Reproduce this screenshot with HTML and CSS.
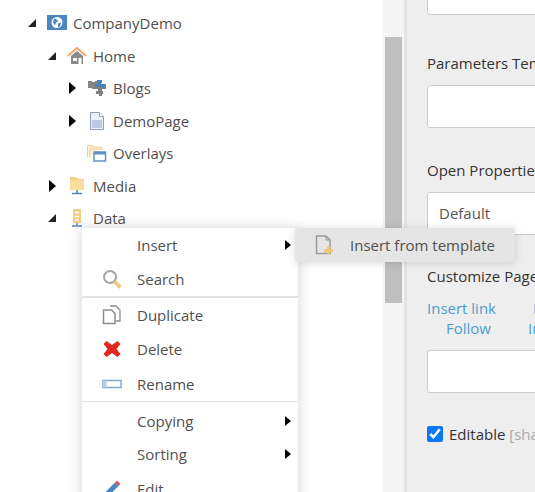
FILE: index.html
```html
<!DOCTYPE html>
<html lang="en">
<head>
  <meta charset="UTF-8" />
  <title>Page Properties</title>
  <link rel="stylesheet" href="styles.css">
</head>
<body>
  <div class="page">
    <div class="tree">
      <div class="row depth-0">
        <span class="arrow open"></span>
        <svg class="icon" viewBox="0 0 20 18"><rect y="1" width="20" height="15" fill="#4a86c0"/><circle cx="10" cy="8.500" r="5.500" fill="#fff"/><path d="M7 4.500l3 1 1 2-2 1-1 3-2-3zM11 9.500l3-1-1 4-2 1z" fill="#4a86c0"/></svg>
        <span class="label">CompanyDemo</span>
      </div>
      <div class="row depth-1">
        <span class="arrow open"></span>
        <svg class="icon" viewBox="0 0 20 18"><path d="M1 9l9-8 9 8" fill="none" stroke="#f2a56c" stroke-width="2"/><path d="M4 9l6-5 6 5v8H4z" fill="#8a8a8a"/><rect x="6" y="11" width="4" height="3" fill="#fff"/><rect x="11.500" y="11" width="3" height="6" fill="#fff"/></svg>
        <span class="label">Home</span>
      </div>
      <div class="row depth-2">
        <span class="arrow closed"></span>
        <svg class="icon" viewBox="0 0 20 18"><path d="M1 2h4v1h3V2h3v7H8v1H5V9H1z" fill="#868686"/><path d="M7 7h4V6h8v4h-4v2h1v3h-1v2h-3v-2H9v-3h2v-2H7z" fill="#808080"/><path d="M10 1h5v3h-1v1h5v3H8V5h3V4h-1z" fill="#4a82bd"/></svg>
        <span class="label">Blogs</span>
      </div>
      <div class="row depth-2">
        <span class="arrow closed"></span>
        <svg class="icon" viewBox="0 0 20 18"><path d="M3.500.5h9l4 4v13h-13z" fill="#eef1f8" stroke="#8d9dbc"/><path d="M5 8h10v8H5z" fill="#bcc8e2"/><path d="M12.500.5v4h4" fill="#fff" stroke="#8d9dbc"/></svg>
        <span class="label">DemoPage</span>
      </div>
      <div class="row depth-2">
        <span class="arrow"></span>
        <svg class="icon" viewBox="0 0 20 18"><path d="M.5 13V1.500h5l1 1.500h8v3" fill="#fdf0d8" stroke="#f3cd8a"/><path d="M3 14V5h13" fill="none" stroke="#f3cd8a"/><rect x="7" y="8" width="11.500" height="9" fill="#fff" stroke="#5f92c6" stroke-width="1.500"/><rect x="7" y="8" width="11.500" height="2.500" fill="#5f92c6"/></svg>
        <span class="label">Overlays</span>
      </div>
      <div class="row depth-1">
        <span class="arrow closed"></span>
        <svg class="icon" viewBox="0 0 20 18"><path d="M3 0h6l2 2h6v11H3z" fill="#f6cd85"/><path d="M3 3h14v10H3z" fill="#fadc9f"/><path d="M10 13v3M5 16.500h10" stroke="#4a86c0" stroke-width="1.500"/></svg>
        <span class="label">Media</span>
      </div>
      <div class="row depth-1">
        <span class="arrow open"></span>
        <svg class="icon" viewBox="0 0 20 18"><path d="M6 0h8v14H6z" fill="#f6cd85"/><path d="M8 3.500h4M8 7.500h4M8 11h4" stroke="#fff" stroke-width="1.500"/><path d="M10 14v2M5 17h10" stroke="#4a86c0" stroke-width="1.500"/></svg>
        <span class="label">Data</span>
      </div>
    </div>

    <div class="scrollbar"><div class="thumb"></div></div>

    <div class="props">
      <div class="field first"><div class="input"></div></div>
      <div class="field">
        <div class="field-label">Parameters Template</div>
        <div class="input"></div>
      </div>
      <div class="field select-field">
        <div class="field-label">Open Properties</div>
        <div class="input select">Default</div>
      </div>
      <div class="field">
        <div class="field-label">Customize Page</div>
        <div class="toolbar">
          <div class="tool-line"><a>Insert link</a><i></i><a>Insert</a></div>
          <div class="tool-line second"><a>Follow</a><i></i><a>Insert</a></div>
        </div>
        <div class="input"></div>
      </div>
      <label class="check">
        <input type="checkbox" checked />
        <span>Editable <em>[shared]</em></span>
      </label>
      <div class="field-label tail">Parameters</div>
    </div>
  </div>

  <div class="menu">
    <div class="item"><span class="item-icon"></span>Insert<span class="sub"></span></div>
    <div class="item">
      <svg class="item-icon" viewBox="0 0 20 20"><circle cx="8" cy="8" r="6" fill="#fff" stroke="#a5a5a5" stroke-width="2"/><path d="M12.500 12.500l6 6" stroke="#f4c878" stroke-width="3.500"/></svg>
      Search
    </div>
    <div class="divider thick"></div>
    <div class="item">
      <svg class="item-icon" viewBox="0 0 20 20"><path d="M8 1h6l4 4v11h-4" fill="#fff" stroke="#8c8c8c" stroke-width="1.300"/><path d="M1.500 5h8l3.500 3.500v10h-11.500z" fill="#fff" stroke="#8c8c8c" stroke-width="1.500"/></svg>
      Duplicate
    </div>
    <div class="item">
      <svg class="item-icon" viewBox="0 0 20 20"><path d="M4.500 2l5.500 4 5.500-4 3 3-4 5 4 5-3 3-5.500-4-5.500 4-3-3 4-5-4-5z" fill="#e0281c"/></svg>
      Delete
    </div>
    <div class="item">
      <svg class="item-icon" viewBox="0 0 20 20"><rect x="1" y="6.500" width="18" height="7" fill="#fff" stroke="#86a8d0" stroke-width="1.500"/><rect x="1" y="6.500" width="3.500" height="7" fill="#b8cce4"/></svg>
      Rename
    </div>
    <div class="divider gap"></div>
    <div class="item tight"><span class="item-icon"></span>Copying<span class="sub"></span></div>
    <div class="item tight"><span class="item-icon"></span>Sorting<span class="sub"></span></div>
    <div class="item last">
      <svg class="item-icon" viewBox="0 0 20 20"><path d="M2 18l1.500-5L13 3.500l3.500 3.500L7 16.500z" fill="#4a86c0"/><path d="M13 3.500l2-2 3.500 3.500-2 2z" fill="#e0574c"/><path d="M2 18l1.500-5 3.500 3.500z" fill="#f0d9b0"/></svg>
      Edit
    </div>
  </div>

  <div class="submenu">
    <svg class="sub-icon" viewBox="0 0 18 20"><path d="M1.500 1h9.500l4 4v13.500H1.500z" fill="none" stroke="#9a9a9a" stroke-width="1.500"/><path d="M11 1v4h4" fill="none" stroke="#9a9a9a"/><path d="M12 11h3v3h3v3h-3v3h-3v-3H9v-3h3z" fill="#f1c677"/></svg>
    Insert from template
  </div>
</body>
</html>
```

FILE: styles.css
```css
body {
  margin: 0;
  height: 492px;
  overflow: hidden;
  position: relative;
  background: #fff;
  color: #505050;
  font-family: 'Open Sans', sans-serif;
  font-size: 15px;
}

.page {
  display: flex;
  height: 492px;
}

/* tree */
.tree {
  width: 383px;
  flex: none;
  padding-top: 7px;
  box-sizing: border-box;
}

.row {
  display: flex;
  align-items: center;
  height: 32.5px;
}

.depth-0 { padding-left: 27px; }
.depth-1 { padding-left: 47px; }
.depth-2 { padding-left: 67px; }

.arrow {
  width: 20px;
  height: 12px;
  flex: none;
  position: relative;
}

.arrow.closed::before {
  content: '';
  position: absolute;
  left: 2px;
  top: 0;
  border-left: 7px solid #000;
  border-top: 6px solid transparent;
  border-bottom: 6px solid transparent;
}

.arrow.open::before {
  content: '';
  position: absolute;
  left: 1px;
  top: 2px;
  border-right: 8px solid #222;
  border-top: 8px solid transparent;
}

.icon {
  width: 20px;
  height: 18px;
  flex: none;
}

.label {
  margin-left: 6px;
}

/* scrollbar */
.scrollbar {
  width: 24px;
  flex: none;
  background: #f5f5f5;
  border-right: 3px solid #e4e4e4;
  padding-top: 37px;
  box-sizing: border-box;
}

.thumb {
  width: 17px;
  height: 266px;
  margin-left: 2px;
  background: #bfbfbf;
}

/* right panel */
.props {
  flex: 1;
  min-width: 0;
  overflow: hidden;
  padding-left: 20px;
  background: #eee;
  white-space: nowrap;
  color: #333;
}

.field {
  margin-bottom: 31px;
}

.field.first {
  margin-top: -28px;
  margin-bottom: 37px;
}

.field.select-field {
  margin-bottom: 30px;
}

.field-label {
  height: 22px;
  line-height: 22px;
  margin-bottom: 11px;
}

.input {
  width: 300px;
  height: 43px;
  box-sizing: border-box;
  background: #fff;
  border: 1px solid #ccc;
  border-radius: 3px;
}

.select {
  padding-left: 11px;
  line-height: 41px;
  color: #555;
}

.toolbar {
  margin-bottom: 12px;
  color: #4a9fd0;
}

.tool-line {
  display: flex;
  align-items: center;
  height: 20px;
}

.tool-line.second {
  padding-left: 19px;
}

.tool-line a {
  line-height: 20px;
}

.tool-line i {
  width: 1px;
  height: 20px;
  background: #ccc;
  margin: 0 19px 0 18px;
}

.check {
  display: flex;
  align-items: center;
  gap: 5px;
  height: 20px;
}

.check input {
  width: 16px;
  height: 16px;
  flex: none;
  margin: 0;
  accent-color: #0a78f5;
}

.check span {
  margin-left: 1px;
}

.check em {
  font-style: normal;
  color: #aaa;
}

.tail {
  margin-top: 42px;
}

/* context menu */
.menu {
  position: absolute;
  left: 82px;
  top: 228px;
  width: 216px;
  background: #fff;
  box-shadow: 0 0 12px rgba(0, 0, 0, 0.18);
}

.item {
  display: flex;
  align-items: center;
  height: 34.3px;
  padding-left: 20px;
  position: relative;
}

.item.tight {
  height: 33px;
}

.item.last {
  margin-top: 2px;
}

.item-icon {
  width: 20px;
  height: 20px;
  margin-right: 15px;
  flex: none;
}

.sub {
  position: absolute;
  right: 7px;
  top: 11.5px;
  border-left: 6px solid #000;
  border-top: 5px solid transparent;
  border-bottom: 5px solid transparent;
}

.divider {
  height: 1px;
  background: #e4e4e4;
}

.divider.thick {
  height: 2px;
  margin-top: -0.6px;
}

.divider.gap {
  margin-bottom: 2.4px;
}

.submenu {
  position: absolute;
  left: 295px;
  top: 228px;
  width: 220px;
  height: 34px;
  display: flex;
  align-items: center;
  padding-left: 20px;
  box-sizing: border-box;
  background: #e5e5e5;
  border-radius: 3px;
  box-shadow: 0 1px 8px rgba(0, 0, 0, 0.15);
}

.sub-icon {
  width: 18px;
  height: 20px;
  margin-right: 17px;
  flex: none;
}
```
